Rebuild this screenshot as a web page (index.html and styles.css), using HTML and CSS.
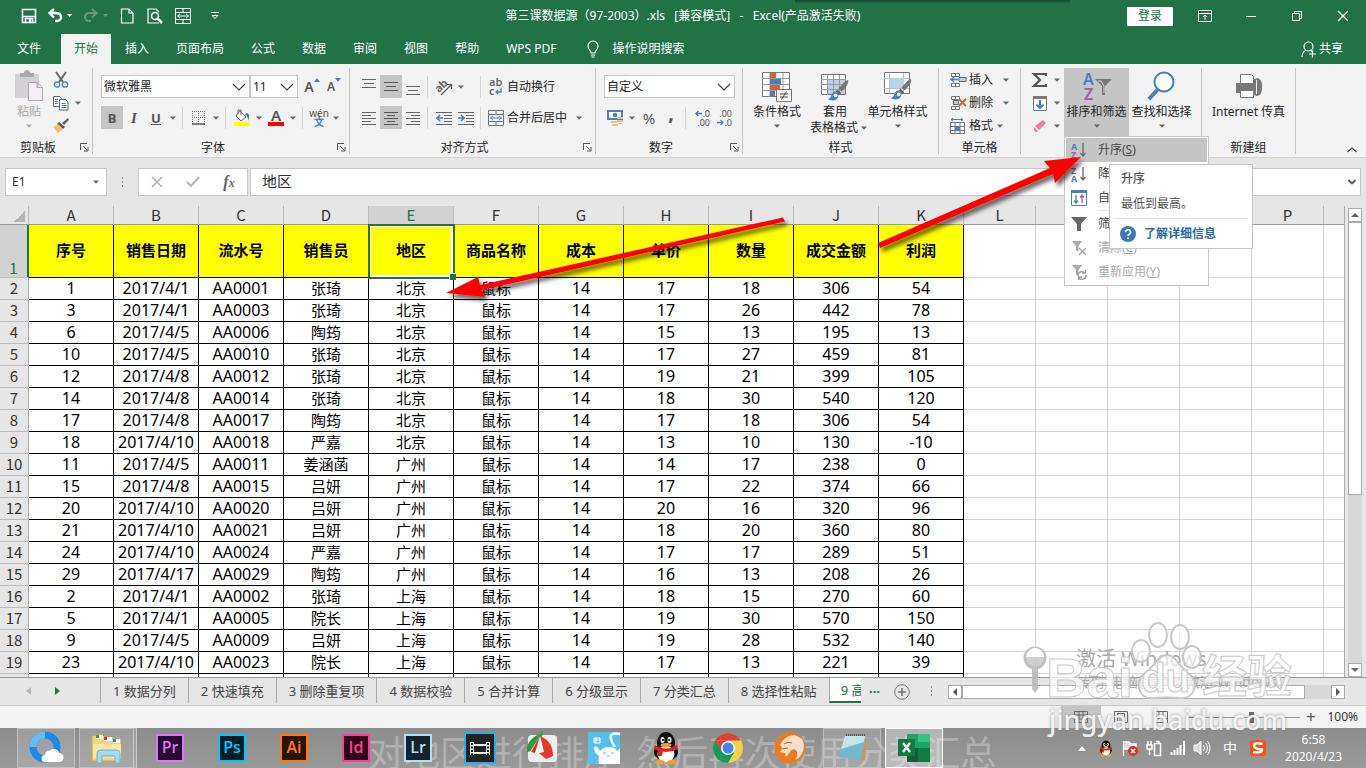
FILE: index.html
```html
<!DOCTYPE html>
<html lang="zh-CN">
<head>
<meta charset="utf-8">
<title>第三课数据源 - Excel</title>
<link rel="stylesheet" href="styles.css">
</head>
<body>
<svg class="defs" width="0" height="0" aria-hidden="true">
  <symbol id="i-arrow" viewBox="0 0 8 8"><path d="M1 2.500h6L4 5.800z" fill="#666"/></symbol>
  <symbol id="i-chev" viewBox="0 0 16 16"><path d="M2 5l6 6 6-6" fill="none" stroke="#444" stroke-width="1.200"/></symbol>
  <symbol id="i-launch" viewBox="0 0 9 9"><path d="M.5 7V.5H7M3 3l4 4M8 4v4H4" fill="none" stroke="#555"/></symbol>
  <symbol id="i-brush" viewBox="0 0 24 24"><path d="M22 1c1 3-2 8-7 12l-3-3c4-5 7-8 10-9z" fill="#777"/><path d="M11 11l4 4-2 2-4-4z" fill="#666"/><path d="M9 13c-5 0-3 6-8 8 6 3 11 1 11-5z" fill="#4a80bd"/><circle cx="9" cy="17" r="2" fill="#fff"/></symbol>
  <symbol id="i-cells" viewBox="0 0 16 16"><path d="M1.500 1.500h8v3h-8zM5.500 1.500v3M1.500 11.500h8v3h-8zM5.500 11.500v3" fill="#fff" stroke="#777"/></symbol>
  <symbol id="i-filter" viewBox="0 0 16 16"><path d="M0 1h16L10 8v7H6V8z"/></symbol>
  <symbol id="i-merge" viewBox="0 0 16 16"><path d="M.5.5h15v15H.5zM.500 4.500h15M.500 11.500h15M8 .5v4M8 11.500v4" class="merge-frame"/><path d="M2.500 8h11M5 5.800L2.700 8 5 10.200M11 5.800L13.300 8 11 10.200" class="merge-arrow"/></symbol>
  <symbol id="i-qq" viewBox="0 0 32 32"><ellipse cx="16" cy="20" rx="12" ry="9" fill="#111"/><ellipse cx="16" cy="11" rx="9" ry="11" fill="#111"/><ellipse cx="16" cy="22" rx="8.500" ry="8" fill="#fff"/><path d="M5 13q11 7 22 0l1 4q-12 6-24 0z" fill="#e71f19"/><path d="M8 17h5l-1 7H8z" fill="#e71f19"/><ellipse cx="12.500" cy="8" rx="2" ry="3" fill="#fff"/><ellipse cx="19.500" cy="8" rx="2" ry="3" fill="#fff"/><circle cx="13" cy="8" r="1"/><circle cx="19" cy="8" r="1"/><ellipse cx="16" cy="13" rx="5.500" ry="2" fill="#f5a31b"/><ellipse cx="10" cy="30" rx="5" ry="2" fill="#f5a31b"/><ellipse cx="22" cy="30" rx="5" ry="2" fill="#f5a31b"/></symbol>
</svg>

<header class="titlebar">
  <div class="quick">
    <button aria-label="保存"><svg width="16" height="16" viewBox="0 0 16 16"><path d="M1.500 1.500h13v13h-13z" fill="none" stroke="#fff" stroke-width="1.600"/><path d="M2 8.500h12M4.500 14v-3.500h7V14" stroke="#fff" stroke-width="1.600" fill="none"/><path d="M8 11h2v3H8z" fill="#fff"/></svg></button>
    <button aria-label="撤消"><svg width="26" height="16" viewBox="0 0 26 16"><path d="M3 5h6c7 0 6 8 1 8H8M7 1L2.500 5 7 9.500" fill="none" stroke="#fff" stroke-width="2.400"/><path d="M20 6h5l-2.500 3z" fill="#fff"/></svg></button>
    <button class="off" aria-label="恢复"><svg width="26" height="16" viewBox="0 0 26 16"><path d="M13 5H7c-7 0-6 8-1 8h2M9 1l4.500 4L9 9.500" fill="none" stroke="#fff" stroke-width="2"/><path d="M20 6h5l-2.500 3z" fill="#fff"/></svg></button>
    <button aria-label="新建"><svg width="14" height="16" viewBox="0 0 14 16"><path d="M1.500 1h7.500l4 4v10H1.500zM9 1v4h4" fill="none" stroke="#fff" stroke-width="1.200"/></svg></button>
    <button aria-label="打印预览"><svg width="16" height="16" viewBox="0 0 16 16"><path d="M12 15H1V1h8l3 3" fill="none" stroke="#fff" stroke-width="1.200"/><circle cx="8" cy="8" r="3.500" fill="none" stroke="#fff" stroke-width="1.600"/><path d="M10 10l5 5" stroke="#fff" stroke-width="2.500"/></svg></button>
    <button aria-label="合并后居中" class="white-icon"><svg width="16" height="16"><use href="#i-merge"/></svg></button>
    <button aria-label="自定义快速访问工具栏"><svg width="10" height="8" viewBox="0 0 10 8"><path d="M1 .5h8M2 3.500l3 3 3-3z" fill="none" stroke="#fff"/></svg></button>
  </div>
  <h1 class="doc-title">第三课数据源（97-2003）.xls&nbsp;&nbsp; [兼容模式]&nbsp;&nbsp; -&nbsp;&nbsp; Excel(产品激活失败)</h1>
  <div class="window-tools">
    <button class="login">登录</button>
    <button aria-label="功能区显示选项"><svg width="14" height="12" viewBox="0 0 14 12"><path d="M.5.500h13v11H.5zM.500 3.500h13M7 10V5M5 7l2-2 2 2" fill="none" stroke="#fff"/></svg></button>
    <button aria-label="最小化"><svg width="10" height="12" viewBox="0 0 10 12"><path d="M0 6.500h10" stroke="#fff"/></svg></button>
    <button aria-label="还原"><svg width="10" height="10" viewBox="0 0 10 10"><path d="M.5 2.500h7v7h-7zM2.500 2V.5h7v7H8" fill="none" stroke="#fff"/></svg></button>
    <button aria-label="关闭"><svg width="10" height="10" viewBox="0 0 10 10"><path d="M0 0l10 10M10 0L0 10" stroke="#fff" stroke-width="1.200"/></svg></button>
  </div>
</header>

<nav class="tabs">
  <button class="file">文件</button><button class="on">开始</button><button>插入</button><button>页面布局</button><button>公式</button><button>数据</button><button>审阅</button><button>视图</button><button>帮助</button><button>WPS PDF</button>
  <button class="tell"><svg width="12" height="17" viewBox="0 0 12 17"><path d="M4 12c0-3-3-3-3-7a5 5 0 0 1 10 0c0 4-3 4-3 7zM4 14h4M4.500 16h3" fill="none" stroke="#fff" stroke-width="1.200"/></svg>操作说明搜索</button>
  <button class="share"><svg width="16" height="17" viewBox="0 0 16 17"><circle cx="7.500" cy="5.500" r="4.500" fill="none" stroke="#fff" stroke-width="1.200"/><path d="M5 9c-3 2-4 4-4 7M9 9l2 1.500M8 13h7M11.500 9.500v7" fill="none" stroke="#fff" stroke-width="1.200"/></svg>共享</button>
</nav>

<section class="ribbon" aria-label="功能区">
  <div class="group g-clip">
    <div class="content row">
      <button class="big paste"><svg width="30" height="32" viewBox="0 0 30 32"><path d="M1 4h24v24H1z" fill="#d5d0d5"/><path d="M6 3h4a3 3 0 0 1 6 0h4v4H6z" fill="#aaa"/><path d="M14.500 12.500h9l5 5v13h-14zM23 12.500v5h5" fill="#f3eff5" stroke="#aaa"/></svg><span>粘贴</span><svg class="dn"><use href="#i-arrow"/></svg></button>
      <div class="stack clip-tools">
        <button class="tool" aria-label="剪切"><svg width="16" height="16" viewBox="0 0 16 16"><path d="M3 0l7 10M13 0L6 10" stroke="#666" stroke-width="2"/><circle cx="4" cy="12.500" r="2.700" fill="none" stroke="#4a80bd" stroke-width="1.300"/><circle cx="12" cy="12.500" r="2.700" fill="none" stroke="#4a80bd" stroke-width="1.300"/></svg></button>
        <div class="row"><button class="tool" aria-label="复制"><svg width="16" height="16" viewBox="0 0 16 16"><path d="M.5 1.500h6l2 2v8h-8z" fill="#fff" stroke="#666"/><path d="M6.500 4.500h6l2.500 2.500v8H6.500z" fill="#fff" stroke="#666"/><path d="M2 4.500h3M2 6.500h3M2 8.500h3M8.500 8.500h4M8.500 10.500h5M8.500 12.500h5" stroke="#4a80bd"/></svg></button><button class="drop" aria-label="复制选项"><svg class="dn"><use href="#i-arrow"/></svg></button></div>
        <button class="tool" aria-label="格式刷"><svg width="16" height="16" viewBox="0 0 16 16"><path d="M15 0l1 2-5 5-2-2z" fill="#666"/><path d="M6 4l6 5-2 2-6-5z" fill="#555"/><path d="M5 6l5 5-5 4-5-6z" fill="#eec07c"/></svg></button>
      </div>
    </div>
    <div class="caption"><span>剪贴板</span><button class="launch" aria-label="剪贴板设置"><svg width="9" height="9"><use href="#i-launch"/></svg></button></div>
  </div>

  <div class="group g-font">
    <div class="content lines">
      <div class="row">
        <label class="combo font-name"><select aria-label="字体"><option>微软雅黑</option></select><svg width="16" height="16"><use href="#i-chev"/></svg></label>
        <label class="combo font-size"><select aria-label="字号"><option>11</option></select><svg width="16" height="16"><use href="#i-chev"/></svg></label>
        <button class="tool grow" aria-label="增大字号">A<svg width="6" height="4" viewBox="0 0 6 4"><path d="M0 4l3-4 3 4z" fill="#4a80bd"/></svg></button>
        <button class="tool shrink" aria-label="减小字号">A<svg width="6" height="4" viewBox="0 0 6 4"><path d="M0 0h6L3 4z" fill="#4a80bd"/></svg></button>
      </div>
      <div class="row">
        <button class="tool sel letter"><b>B</b></button><button class="tool letter serif"><i>I</i></button><button class="tool letter"><u>U</u></button><button class="drop" aria-label="下划线选项"><svg class="dn"><use href="#i-arrow"/></svg></button><i class="sep"></i>
        <button class="tool" aria-label="边框"><svg width="14" height="14" viewBox="0 0 14 14"><path d="M.5 0v13M6.500 0v13M12.500 0v13M0 .5h13M0 6.500h13" stroke="#777" stroke-dasharray="1 1"/><path d="M0 13h13" stroke="#555" stroke-width="1.500"/></svg></button><button class="drop" aria-label="边框选项"><svg class="dn"><use href="#i-arrow"/></svg></button><i class="sep"></i>
        <button class="tool" aria-label="填充颜色"><svg width="16" height="17" viewBox="0 0 16 17"><path d="M6 2l6 6-5 4-5-5zM4 5V1h3v5" fill="#fff" stroke="#666"/><path d="M12 4c4 0 4 4 2 8 0-4-1-5-3-6z" fill="#4a80bd"/><path d="M0 13h16v4H0z" fill="#ff0"/></svg></button><button class="drop" aria-label="填充选项"><svg class="dn"><use href="#i-arrow"/></svg></button>
        <button class="tool font-color" aria-label="字体颜色">A</button><button class="drop" aria-label="颜色选项"><svg class="dn"><use href="#i-arrow"/></svg></button><i class="sep"></i>
        <button class="tool pinyin"><span>wén</span><span class="blue">文</span></button><button class="drop" aria-label="拼音选项"><svg class="dn"><use href="#i-arrow"/></svg></button>
      </div>
    </div>
    <div class="caption"><span>字体</span><button class="launch" aria-label="字体设置"><svg width="9" height="9"><use href="#i-launch"/></svg></button></div>
  </div>

  <div class="group g-align">
    <div class="content lines">
      <div class="row">
        <button class="tool" aria-label="顶端对齐"><svg width="14" height="16" viewBox="0 0 14 16"><path d="M0 .5h14M2 4.500h10M0 8.500h14" stroke="#666"/></svg></button><button class="tool sel" aria-label="垂直居中"><svg width="14" height="16" viewBox="0 0 14 16"><path d="M0 3.500h14M2 7.500h10M0 11.500h14" stroke="#555"/></svg></button><button class="tool" aria-label="底端对齐"><svg width="14" height="16" viewBox="0 0 14 16"><path d="M0 7.500h14M2 11.500h10M0 15.500h14" stroke="#666"/></svg></button><i class="sep"></i>
        <button class="tool" aria-label="方向"><svg width="18" height="18" viewBox="0 0 18 18"><text x="0" y="12" transform="rotate(-45 6 9)" font-size="11" font-weight="bold" fill="#666">ab</text><path d="M6 17L16 7M12 6.500h4.500V11" fill="none" stroke="#555" stroke-width="1.200"/></svg></button><button class="drop after-orient" aria-label="方向选项"><svg class="dn"><use href="#i-arrow"/></svg></button><i class="sep"></i>
        <button class="labeled"><svg width="16" height="18" viewBox="0 0 16 18"><text x="1" y="8" font-size="11" font-weight="600" fill="#666">ab</text><text x="1" y="17" font-size="11" font-weight="600" fill="#666">c</text><path d="M13 10v4H8M10 12l-2 2 2 2" fill="none" stroke="#4a80bd" stroke-width="1.300"/></svg>自动换行</button>
      </div>
      <div class="row">
        <button class="tool" aria-label="左对齐"><svg width="14" height="14" viewBox="0 0 14 14"><path d="M0 1.500h14M0 4.500h9M0 7.500h14M0 10.500h9M0 13.500h14" stroke="#666"/></svg></button><button class="tool sel" aria-label="居中"><svg width="14" height="14" viewBox="0 0 14 14"><path d="M0 1.500h14M3 4.500h8M0 7.500h14M3 10.500h8M0 13.500h14" stroke="#555"/></svg></button><button class="tool" aria-label="右对齐"><svg width="14" height="14" viewBox="0 0 14 14"><path d="M0 1.500h14M5 4.500h9M0 7.500h14M5 10.500h9M0 13.500h14" stroke="#666"/></svg></button><i class="sep"></i>
        <button class="tool" aria-label="减少缩进"><svg width="16" height="14" viewBox="0 0 16 14"><path d="M0 1.500h16M8 4.500h8M8 7.500h8M8 10.500h8M0 13.500h16" stroke="#666"/><path d="M7 7H1M4 4L1 7l3 3" fill="none" stroke="#4a80bd" stroke-width="1.700"/></svg></button><button class="tool" aria-label="增加缩进"><svg width="16" height="14" viewBox="0 0 16 14"><path d="M0 1.500h16M8 4.500h8M8 7.500h8M8 10.500h8M0 13.500h16" stroke="#666"/><path d="M0 7h6M3 4l3 3-3 3" fill="none" stroke="#4a80bd" stroke-width="1.700"/></svg></button><i class="sep"></i>
        <button class="labeled"><svg width="16" height="16"><use href="#i-merge"/></svg>合并后居中</button><button class="drop push" aria-label="合并选项"><svg class="dn"><use href="#i-arrow"/></svg></button>
      </div>
    </div>
    <div class="caption"><span>对齐方式</span><button class="launch" aria-label="对齐设置"><svg width="9" height="9"><use href="#i-launch"/></svg></button></div>
  </div>

  <div class="group g-num">
    <div class="content lines">
      <div class="row"><label class="combo num-format"><select aria-label="数字格式"><option>自定义</option></select><svg width="16" height="16"><use href="#i-chev"/></svg></label></div>
      <div class="row">
        <button class="tool" aria-label="会计数字格式"><svg width="17" height="16" viewBox="0 0 17 16"><path d="M1 1h14v8H1z" fill="#fff" stroke="#4a80bd" stroke-width="2"/><circle cx="8" cy="5" r="2.300" fill="#4a80bd"/><path d="M10 7h6v2h-6zM10 10h6v2h-6zM4 11h6v2H4zM5 14h6v2H5zM11 13h5v1h-5z" fill="#eec07c"/></svg></button><button class="drop" aria-label="会计选项"><svg class="dn"><use href="#i-arrow"/></svg></button>
        <button class="tool percent">%</button><button class="tool comma">,</button><i class="sep"></i>
        <button class="tool dec" aria-label="增加小数位数"><span><svg width="7" height="7" viewBox="0 0 7 7"><path d="M7 3.500H1M3.500 1L1 3.500 3.500 6" fill="none" stroke="#4a80bd" stroke-width="1.400"/></svg>.0</span><span>.00</span></button><button class="tool dec" aria-label="减少小数位数"><span>.00</span><span><svg width="7" height="7" viewBox="0 0 7 7"><path d="M0 3.500h6M3.500 1L6 3.500 3.500 6" fill="none" stroke="#4a80bd" stroke-width="1.400"/></svg>.0</span></button>
      </div>
    </div>
    <div class="caption"><span>数字</span><button class="launch" aria-label="数字设置"><svg width="9" height="9"><use href="#i-launch"/></svg></button></div>
  </div>

  <div class="group g-style">
    <div class="content row">
      <button class="big"><svg width="32" height="32" viewBox="0 0 32 32"><path d="M1.500 2.500h27v24h-27z" fill="#fff" stroke="#777"/><path d="M1 8.500h27M1 14.500h27M1 20.500h27M9 3v24M22 3v24" stroke="#999"/><path d="M9 3h6v5H9zM9 15h10v5H9z" fill="#d9603b"/><path d="M9 9h11v5H9zM9 21h5v5H9z" fill="#4a80bd"/><path d="M15.500 19.500h15v12h-15z" fill="#fff" stroke="#777"/><path d="M19 24h8M19 27h8M25.500 21.500l-5 8" stroke="#444"/></svg><span>条件格式</span><svg class="dn"><use href="#i-arrow"/></svg></button>
      <button class="big"><svg width="32" height="32" viewBox="0 0 32 32"><path d="M2.500 4.500h24v20h-24z" fill="#fff" stroke="#777"/><path d="M8 9h18v15H8z" fill="#bdd0e9"/><path d="M2 9.500h25M2 14.500h25M2 19.500h25M8.500 5v20M14.500 5v20M20.500 5v20" stroke="#999"/><use href="#i-brush" x="8" y="9" width="23" height="23"/></svg><span>套用</span><span class="two">表格格式<svg class="dn"><use href="#i-arrow"/></svg></span></button>
      <button class="big cell-style"><svg width="32" height="32" viewBox="0 0 32 32"><path d="M2.500 2.500h25v21h-25z" fill="#fff" stroke="#777"/><path d="M2 8.500h25M2 18.500h25M7.500 3v20M21.500 3v20" stroke="#bbb"/><path d="M8 8h14v10H8z" fill="#bdd0e9"/><use href="#i-brush" x="8" y="8" width="23" height="23"/></svg><span>单元格样式</span><svg class="dn"><use href="#i-arrow"/></svg></button>
    </div>
    <div class="caption"><span>样式</span></div>
  </div>

  <div class="group g-cells">
    <div class="content stack">
      <button class="labeled"><svg width="16" height="16" viewBox="0 0 16 16"><use href="#i-cells"/><path d="M9 5.500h7v4H9z" fill="#bdd0e9" stroke="#666"/><path d="M8 7.500H1M4 5L1 7.500 4 10" fill="none" stroke="#4a80bd" stroke-width="1.500"/></svg>插入<svg class="dn far"><use href="#i-arrow"/></svg></button>
      <button class="labeled"><svg width="16" height="16" viewBox="0 0 16 16"><use href="#i-cells"/><path d="M3.500 5.500h5v4h-5z" fill="#bdd0e9" stroke="#666"/><path d="M9 4l7 7M16 4l-7 7" stroke="#d9603b" stroke-width="1.800"/></svg>删除<svg class="dn far"><use href="#i-arrow"/></svg></button>
      <button class="labeled"><svg width="16" height="16" viewBox="0 0 16 16"><path d="M1 1.500h12M3 0L1 1.500 3 3M11 0l2 1.500L11 3" fill="none" stroke="#4a80bd"/><path d="M.5 4.500h14v11H.5zM.5 8.500h14M.5 12.500h14M5 4.500v11M10 4.500v11" fill="#fff" stroke="#777"/><path d="M5 8h5v4H5z" fill="#4a80bd"/></svg>格式<svg class="dn"><use href="#i-arrow"/></svg></button>
    </div>
    <div class="caption"><span>单元格</span></div>
  </div>

  <div class="group g-edit">
    <div class="content row">
      <div class="stack edit-tools">
        <div class="row"><button class="tool" aria-label="自动求和"><svg width="16" height="16" viewBox="0 0 16 16"><path d="M14 4V2H2l6 6-6 6h12v-2" fill="none" stroke="#555" stroke-width="2.200"/></svg></button><button class="drop" aria-label="求和选项"><svg class="dn"><use href="#i-arrow"/></svg></button></div>
        <div class="row"><button class="tool" aria-label="填充"><svg width="14" height="16" viewBox="0 0 14 16"><path d="M.5 1.500h13v14H.5z" fill="#fff" stroke="#777"/><path d="M0 1h14v3H0z" fill="#777"/><path d="M7 5v8M3.500 9.500L7 13l3.500-3.500" fill="none" stroke="#4a80bd" stroke-width="2"/></svg></button><button class="drop" aria-label="填充选项"><svg class="dn"><use href="#i-arrow"/></svg></button></div>
        <div class="row"><button class="tool" aria-label="清除"><svg width="14" height="14" viewBox="0 0 14 14"><path d="M10 1l3 3-7 7-4-4z" fill="#e8829a"/><path d="M1 8l4 4-1 1H2l-1-2z" fill="#e8829a"/></svg></button><button class="drop" aria-label="清除选项"><svg class="dn"><use href="#i-arrow"/></svg></button></div>
      </div>
      <div class="anchor">
        <button class="big sel" aria-expanded="true"><svg width="32" height="32" viewBox="0 0 32 32"><text x="2" y="15" font-size="16" font-weight="600" fill="#4a80bd">A</text><text x="3" y="30" font-size="16" font-weight="600" fill="#9b59b6">Z</text><path d="M14 9h17l-7 7v9h-3v-9z" fill="#777"/><path d="M17 11h3l3 5v7" fill="none" stroke="#ddd"/></svg><span>排序和筛选</span><svg class="dn"><use href="#i-arrow"/></svg></button>
        <div class="menu" role="menu">
          <button class="hot" role="menuitem"><svg width="16" height="16" viewBox="0 0 16 16"><text x="0" y="8" font-size="9" font-weight="bold" fill="#4a80bd">A</text><text x="0" y="16" font-size="9" font-weight="bold" fill="#9b59b6">Z</text><path d="M12 1v13M9.500 11l2.500 3 2.500-3" fill="none" stroke="#666" stroke-width="1.300"/></svg>升序(<u>S</u>)</button>
          <button role="menuitem"><svg width="16" height="16" viewBox="0 0 16 16"><text x="0" y="8" font-size="9" font-weight="bold" fill="#9b59b6">Z</text><text x="0" y="16" font-size="9" font-weight="bold" fill="#4a80bd">A</text><path d="M12 1v13M9.500 11l2.500 3 2.500-3" fill="none" stroke="#666" stroke-width="1.300"/></svg>降序(<u>O</u>)</button>
          <button role="menuitem"><svg width="16" height="16" viewBox="0 0 16 16"><path d="M.5.500h15v15H.5z" fill="#fff" stroke="#4a80bd"/><path d="M0 0h16v3H0z" fill="#4a80bd"/><path d="M5 5v8M3 10.500L5 13l2-2.500" fill="none" stroke="#4a80bd" stroke-width="1.300"/><path d="M11 13V5M9 7.500L11 5l2 2.500" fill="none" stroke="#9b59b6" stroke-width="1.300"/></svg>自定义排序(<u>U</u>)...</button>
          <hr>
          <button role="menuitem"><svg width="16" height="16" fill="#666"><use href="#i-filter"/></svg>筛选(<u>F</u>)</button>
          <button role="menuitem" disabled><svg width="16" height="16" viewBox="0 0 16 16"><path d="M1 1h10L7.500 6v5H5V6z" fill="#aaa"/><path d="M8 8l7 7M15 8l-7 7" stroke="#aaa" stroke-width="1.500"/></svg>清除(<u>C</u>)</button>
          <button role="menuitem" disabled><svg width="16" height="16" viewBox="0 0 16 16"><path d="M1 1h10L7.500 6v5H5V6z" fill="#aaa"/><path d="M7 12a4 4 0 0 1 7-3M15 11a4 4 0 0 1-7 3M14.500 6v3H11M7.500 16v-3H11" fill="none" stroke="#999" stroke-width="1.300"/></svg>重新应用(<u>Y</u>)</button>
          <div class="tip" role="tooltip">
            <strong>升序</strong><p>最低到最高。</p>
            <a href="#help"><svg width="16" height="16" viewBox="0 0 16 16"><circle cx="8" cy="8" r="8" fill="#3a77b5"/><path d="M5.500 6.200a2.500 2.500 0 1 1 3.600 2.200Q8 9 8 10" fill="none" stroke="#fff" stroke-width="1.600"/><circle cx="8" cy="12.300" r="1" fill="#fff"/></svg>了解详细信息</a>
          </div>
        </div>
      </div>
      <button class="big find"><svg width="32" height="32" viewBox="0 0 32 32"><path d="M3 29l10-11" stroke="#4a80bd" stroke-width="4"/><circle cx="18" cy="12" r="9.500" fill="#fff" stroke="#4a80bd" stroke-width="2"/></svg><span>查找和选择</span><svg class="dn"><use href="#i-arrow"/></svg></button>
    </div>
    <div class="caption"></div>
  </div>

  <div class="group g-fax">
    <div class="content row">
      <button class="big"><svg width="32" height="32" viewBox="0 0 32 32"><path d="M3 13h18V9l4-1q5 3 4 10 0 7-5 8l-3-1v-2H3z" fill="#777"/><path d="M7.500 4.500h11l2 2v7h-13zM7.500 20.500h13v7h-13z" fill="#fff" stroke="#777"/><path d="M23.500 10v14" stroke="#eee"/></svg><span>Internet 传真</span></button>
    </div>
    <div class="caption"><span>新建组</span></div>
  </div>
  <button class="collapse" aria-label="折叠功能区"><svg width="12" height="8" viewBox="0 0 12 8"><path d="M1.500 6L6 2l4.500 4" fill="none" stroke="#444" stroke-width="1.200"/></svg></button>
</section>

<section class="formula">
  <label class="combo name-box"><select aria-label="名称框"><option>E1</option></select><svg class="dn"><use href="#i-arrow"/></svg></label>
  <span class="grip"></span>
  <div class="fx-tools">
    <button aria-label="取消"><svg width="12" height="12" viewBox="0 0 12 12"><path d="M1 1l10 10M11 1L1 11" stroke="#b5b5b5" stroke-width="1.700"/></svg></button>
    <button aria-label="输入"><svg width="14" height="12" viewBox="0 0 14 12"><path d="M1 6l4 4 8-9" fill="none" stroke="#b5b5b5" stroke-width="2.200"/></svg></button>
    <button class="fx">f<small>x</small></button>
  </div>
  <div class="fx-input"><input aria-label="编辑栏" value="地区"><svg width="10" height="10" viewBox="0 0 10 10"><path d="M1.500 3L5 6.500 8.500 3" fill="none" stroke="#555" stroke-width="1.800"/></svg></div>
</section>

<main class="sheet">
  <div class="viewport"><table class="grid"><colgroup id="cols"></colgroup><thead id="head"></thead><tbody id="body"></tbody></table></div>
  <div class="vscroll"><button aria-label="向上滚动"><svg width="8" height="8" viewBox="0 0 8 8"><path d="M0 6l4-4 4 4z" fill="#666"/></svg></button><div class="track"><div class="thumb"></div></div><button aria-label="向下滚动"><svg width="8" height="8" viewBox="0 0 8 8"><path d="M0 2l4 4 4-4z" fill="#666"/></svg></button></div>
</main>

<nav class="sheet-tabs">
  <div class="nav-arrows"><button aria-label="上一个"><svg width="6" height="8" viewBox="0 0 6 8"><path d="M5 0v8L0 4z" fill="#b5b5b5"/></svg></button><button aria-label="下一个"><svg width="6" height="8" viewBox="0 0 6 8"><path d="M1 0v8l5-4z" fill="#217346"/></svg></button></div>
  <div class="sheets"><button>1 数据分列</button><button>2 快速填充</button><button>3 删除重复项</button><button>4 数据校验</button><button>5 合并计算</button><button>6 分级显示</button><button>7 分类汇总</button><button>8 选择性粘贴</button><button class="current">9 高级筛选</button></div>
  <button class="more" aria-label="更多工作表">...</button>
  <button class="add" aria-label="新工作表"><svg width="16" height="16" viewBox="0 0 16 16"><circle cx="8" cy="8" r="7.300" fill="none" stroke="#777"/><path d="M8 4v8M4 8h8" stroke="#777" stroke-width="1.700"/></svg></button>
  <span class="grip"></span>
  <div class="hscroll"><button aria-label="向左滚动"><svg width="8" height="8" viewBox="0 0 8 8"><path d="M6 0v8L2 4z" fill="#555"/></svg></button><div class="track"><div class="thumb"></div></div><button aria-label="向右滚动"><svg width="8" height="8" viewBox="0 0 8 8"><path d="M2 0v8l4-4z" fill="#555"/></svg></button></div>
</nav>

<footer class="status">
  <button class="sel" aria-label="普通"><svg width="14" height="12" viewBox="0 0 14 12"><path d="M.5.500h13v11H.5zM.5 4h13M.5 8h13M5 .5v11M9 .5v11" fill="none" stroke="#666"/></svg></button>
  <button aria-label="页面布局"><svg width="14" height="12" viewBox="0 0 14 12"><path d="M.5.500h13v11H.5zM3.500 2.500h7v9h-7zM5 5h4M5 7h4M5 9h4" fill="none" stroke="#666"/></svg></button>
  <button aria-label="分页预览"><svg width="14" height="12" viewBox="0 0 14 12"><path d="M.5.500h13v11H.5zM5 .5v6.500M9 .5v6.500M.5 7.500h5M9 7.500h5" fill="none" stroke="#666"/></svg></button>
  <button class="zoom-btn">−</button><input class="zoom" type="range" min="0" max="100" value="50" aria-label="显示比例"><button class="zoom-btn">+</button><span class="zoom-value">100%</span>
</footer>

<footer class="taskbar">
  <p class="subtitle">对地区进行排序&nbsp; 然后再次使用分类汇总</p>
  <div class="apps">
    <button class="open" aria-label="浏览器"><svg width="34" height="34" viewBox="0 0 34 34"><circle cx="16" cy="16" r="12" fill="none" stroke="#1e88e5" stroke-width="7"/><path d="M4 16A12 12 0 0 1 16 4" fill="none" stroke="#63bdf5" stroke-width="7"/><path d="M16 31h14a4.500 4.500 0 0 0 0-9 5 5 0 0 0-9-2 4 4 0 0 0-5 4 3.500 3.500 0 0 0 0 7z" fill="#fff"/></svg></button>
    <button class="open multi" aria-label="文件资源管理器"><svg width="34" height="32" viewBox="0 0 34 32"><path d="M2 4l10-2 3 3 16 2v22H2z" fill="#f1d681" stroke="#c9a94d"/><path d="M6 3h7v4H6zM14 5h8v4h-8zM23 7h7v4h-7z" fill="#fff"/><path d="M6 3h3v3H6z" fill="#2e9e3e"/><path d="M14 5h3v3h-3z" fill="#c33"/><path d="M23 7h3v3h-3z" fill="#28c"/><path d="M3 12h28v14H3z" fill="#f8e7a7"/><path d="M7 31V21q0-3 4-3h15q4 0 4 3v10h-5v-7H12v7z" fill="#a6d8ee" stroke="#6fb1cf"/></svg></button>
    <button><span class="adobe pr">Pr</span></button><button><span class="adobe ps">Ps</span></button><button><span class="adobe ai">Ai</span></button><button><span class="adobe id">Id</span></button><button><span class="adobe lr">Lr</span></button>
    <button aria-label="视频编辑"><svg width="32" height="32" viewBox="0 0 32 32"><path d="M1 1h30v30H1z" fill="#222" stroke="#1db4ea" stroke-width="2"/><path d="M6 10h4v13H6zM22 10h4v13h-4zM10 12h12v2H10zM10 20h12v2H10z" fill="#eee"/><path d="M8 11v12M24 11v12" stroke="#222" stroke-width="2" stroke-dasharray="2 1.500"/></svg></button>
    <button aria-label="播放器"><svg width="34" height="34" viewBox="0 0 34 34"><rect x="3" y="4" width="29" height="27" rx="4" fill="#eee"/><path d="M15 3C6 6 1 13 2 21l6-1 9-15z" fill="#2d9b3c"/><path d="M15 5L5 21l10 1z" fill="#fff"/><path d="M15 5L6 21l4 1z" fill="#d72e28"/><path d="M15 5l-1 17 7 6 7-3Q28 10 15 5z" fill="#e33a2c"/><path d="M15 5l-1 17 5-1z" fill="#fff"/><path d="M12 6l5-6 1 1-1 5z" fill="#31a245"/></svg></button>
    <button aria-label="字幕工具"><svg width="32" height="32" viewBox="0 0 32 32"><path d="M0 0h32v32H0z" fill="#56c0e8"/><path d="M11 32q-1-5 0-8-6-4-5-9 3-2 6 4 3-4 9-4 6 0 8 4l3-3v16z" fill="#fff"/><path d="M32 2q-11-2-9 5 1 4 4 8" fill="none" stroke="#fff" stroke-width="2.500"/><path d="M15 21h3M23 21h3M19 24h3" stroke="#56c0e8"/><path d="M6 6h6v5H6zM8 6v5M6 8h6" fill="none" stroke="#fff"/></svg></button>
    <button aria-label="QQ"><svg width="32" height="32"><use href="#i-qq"/></svg></button>
    <button aria-label="Chrome"><svg width="30" height="30" viewBox="0 0 30 30"><circle cx="15" cy="15" r="15" fill="#f9cf45"/><path d="M2 7.500A15 15 0 0 1 28 7.500H15z" fill="#db4437"/><path d="M2 7.500A15 15 0 0 0 15 30l6.500-11.300L15 15z" fill="#0f9d58"/><path d="M2 7.500L8.500 19 15 7.500z" fill="#db4437"/><circle cx="15" cy="15" r="7" fill="#fff"/><circle cx="15" cy="15" r="5.500" fill="#4285f4"/></svg></button>
    <button aria-label="浏览器"><svg width="32" height="32" viewBox="0 0 32 32"><circle cx="16" cy="16" r="15.500" fill="#ee7a1f"/><path d="M6 13Q10 4 20 3q9 2 10 10 0 11-9 15 4-6 1-10-4-2-6 2l-4 5-1-4-5-1q4-4 0-7z" fill="#f9dfc9"/><path d="M10 12q4-3 8-1M8 17l6-1" stroke="#c55a12" fill="none"/></svg></button>
    <button class="open" aria-label="记事本"><svg width="34" height="32" viewBox="0 0 34 32"><path d="M28 4l4 3-2 21-4 1z" fill="#b99c69"/><path d="M10 4h20l-4 24-23-3z" fill="#72b9cc"/><path d="M10 4h20l-1 6L6 17z" fill="#c3e6ec"/><path d="M11 3h19" stroke="#555" stroke-width="2" stroke-dasharray="1 1"/></svg></button>
    <button class="open front" aria-label="Excel"><svg width="32" height="30" viewBox="0 0 32 30"><path d="M9 1h23v28H9z" fill="#21a366"/><path d="M20 1h12v8H20z" fill="#33c481"/><path d="M9 15h12v14H9z" fill="#185c37"/><path d="M20 15h12v14H20z" fill="#107c41"/><path d="M0 6h17v17H0z" fill="#107c41"/><path d="M5 10l7 9M12 10l-7 9" stroke="#fff" stroke-width="2.300"/></svg></button>
  </div>
  <div class="tray">
    <button aria-label="显示隐藏的图标"><svg width="8" height="5" viewBox="0 0 8 5"><path d="M4 0l4 5H0z" fill="#fff"/></svg></button>
    <button aria-label="QQ"><svg width="16" height="17"><use href="#i-qq"/></svg></button>
    <button aria-label="操作中心"><svg width="17" height="16" viewBox="0 0 17 16"><path d="M1.500 1v15M2 2h5l2 2h5v7H9L7 9H2" fill="#ddd" stroke="#fff" stroke-width="1.300"/><circle cx="11" cy="11" r="5" fill="#d8302a"/><path d="M9 9l4 4M13 9l-4 4" stroke="#fff" stroke-width="1.500"/></svg></button>
    <button aria-label="电源"><svg width="16" height="16" viewBox="0 0 16 16"><path d="M8.500 3.500h6v12h-6zM10 1.500h3v2M2 1v4M5 1v4M1 5h5v4H1zM3.500 9v6" fill="none" stroke="#fff" stroke-width="1.500"/></svg></button>
    <button aria-label="网络"><svg width="16" height="14" viewBox="0 0 16 14"><path d="M1.500 14v-3M4.500 14v-5M7.500 14V7M10.500 14V4M14 14V0" stroke="#fff" stroke-width="2"/></svg></button>
    <button aria-label="音量"><svg width="16" height="16" viewBox="0 0 16 16"><path d="M0 5h3l4-4v14l-4-4H0z" fill="#ddd" stroke="#fff"/><path d="M9.500 5q2 3 0 6M11.500 3q4 5 0 10M13.500 1q5 7 0 14" fill="none" stroke="#fff"/></svg></button>
    <button class="ime">中</button>
    <button aria-label="输入法"><svg width="16" height="16" viewBox="0 0 16 16"><rect width="16" height="16" rx="3" fill="#f4511e"/><path d="M12.500 4Q4 2 4 5.500T12 9.500Q12 13.500 3 12" fill="none" stroke="#fff" stroke-width="2.400"/></svg></button>
    <div class="clock"><time>6:58</time><time>2020/4/23</time></div>
  </div>
</footer>

<svg class="annot" width="1366" height="768" viewBox="0 0 1366 768" aria-hidden="true">
  <defs><filter id="soft" x="-20%" y="-20%" width="140%" height="150%"><feDropShadow dx="3" dy="4" stdDeviation="2" flood-opacity=".6"/></filter></defs>
  <g fill="#f00" filter="url(#soft)">
    <path d="M446 293l32-16 2 8L783 217.500l2 4L482 290l3 7z"/>
    <path d="M1081 157l-37 4 6 7L878 243l2 5 173-74 2 9z"/>
  </g>
</svg>

<div class="watermark" aria-hidden="true">
  <svg class="key" width="26" height="48" viewBox="0 0 26 48"><circle cx="13" cy="13" r="10" fill="#ccc" stroke="#bbb" stroke-width="3"/><path d="M4 12a9 9 0 0 1 18 0z" fill="#fff"/><path d="M10 24h6v20l-3 4-3-4z" fill="#bbb"/></svg>
  <div class="activate"><p class="a1">激活 Windows</p><p class="a2">转到"电脑设置"以激活 Windows。</p></div>
  <svg class="paw" width="72" height="80" viewBox="0 0 72 80"><g fill="#fff" fill-opacity=".65" stroke="#c8c8c8" stroke-width="2"><ellipse cx="28" cy="15" rx="9" ry="12"/><ellipse cx="50" cy="17" rx="9" ry="12"/><ellipse cx="11" cy="31" rx="9" ry="11"/><ellipse cx="62" cy="37" rx="9" ry="11"/><path d="M37 35c9 0 12 12 22 19 11 9 5 25-8 24q-14-1-29 0c-13 1-18-15-8-24 10-7 14-19 23-19z"/></g></svg>
  <p class="brand"><span class="bai">Bai</span><span class="du">du</span><span class="jy">经验</span></p>
  <p class="url">jingyan.baidu.com</p>
</div>
<script src="grid.js"></script>
</body>
</html>
```

FILE: styles.css
```css
* { box-sizing: border-box; }
body { margin: 0; height: 100vh; display: flex; flex-direction: column; position: relative; overflow: hidden; background: #e6e6e6; color: #333; font: 12px/16px "Noto Sans", "Noto Sans CJK SC", sans-serif; }
button, input, select { font: inherit; color: inherit; }
button { border: 0; padding: 0; background: none; display: flex; align-items: center; justify-content: center; white-space: nowrap; }
p, h1 { margin: 0; font-weight: normal; }
svg { flex: none; display: block; overflow: visible; }
.defs { position: absolute; }
.row { display: flex; align-items: center; }
.stack { display: flex; flex-direction: column; }
.dn { width: 8px; height: 8px; }
.merge-frame { fill: none; stroke: var(--frame, #777); }
.merge-arrow { fill: none; stroke: var(--arrow, #4a80bd); }

.titlebar { display: grid; grid-template-columns: 1fr auto 1fr; align-items: center; min-height: 32px; background: linear-gradient(#17452d, #217346) 795px 0 / 275px 4px no-repeat #217346; color: #fff; }
.quick { display: flex; align-items: center; gap: 10px; padding-left: 21px; }
.quick button:nth-child(4) { margin: 0 3px 0 1px; }
.quick button:nth-child(6) { margin: 0 9px 0 2px; }
.quick .off { opacity: .3; }
.white-icon { --frame: #fff; --arrow: #fff; }
.doc-title { font-size: 12px; line-height: 16px; }
.window-tools { display: flex; justify-content: flex-end; align-items: center; }
.window-tools button { width: 46px; height: 30px; }
.window-tools .login { height: 19px; background: #fff; color: #217346; border-radius: 1px; margin-right: 9px; }
.tabs { display: flex; align-items: stretch; gap: 1px; min-height: 32px; padding-top: 2px; background: #217346; color: #fff; }
.tabs button { padding: 0 13px; color: #fff; }
.tabs .file { padding: 0 19px 0 17px; }
.tabs .on { background: #f3f3f3; color: #217346; }
.tabs .tell { gap: 14px; padding-left: 16px; }
.tabs .share { margin-left: auto; gap: 2px; padding-right: 23px; }

.ribbon { display: flex; align-items: stretch; background: #f3f3f3; border-bottom: 1px solid #d2d2d2; padding: 4px 0 3px; position: relative; z-index: 3; }
.group { display: flex; flex-direction: column; border-right: 1px solid #c6c6c6; min-height: 86px; flex: none; color: #262626; }
.content { height: 73px; flex: none; }
.content.row { align-items: flex-start; }
.caption { display: flex; height: 13px; align-items: center; }
.caption span { flex: 1; text-align: center; }
.launch { width: 16px; height: 16px; }
.g-clip { width: 93px; }
.g-font { width: 257px; }
.g-align { width: 246px; }
.g-num { width: 147px; }
.g-style { width: 196px; }
.g-cells { width: 82px; }
.g-edit { width: 181px; }
.g-fax { width: 94px; }
.lines { padding: 7px 8px 0; display: flex; flex-direction: column; gap: 8px; }
.tool { width: 22px; height: 23px; color: #555; flex: none; }
.drop { width: 12px; height: 23px; flex: none; }
.sel { background: #c5c5c5; }
.sep { width: 1px; height: 22px; margin: 0 5px 0 3px; background: #d5d5d5; flex: none; }
.big { flex-direction: column; justify-content: flex-start; padding-top: 2px; width: 58px; height: 68px; line-height: 16px; flex: none; }
.big > svg:first-child { margin-bottom: 2px; }
.big .dn { margin-top: 2px; }
.paste { margin-left: 4px; width: 50px; color: #aaa; }
.paste .dn { opacity: .5; }
.clip-tools { margin-left: -4px; }
.combo { display: grid; align-items: center; background: #fff; border: 1px solid #c6c6c6; height: 23px; flex: none; }
.combo > * { grid-area: 1 / 1; }
.combo > svg { justify-self: end; margin-right: 2px; pointer-events: none; }
.combo select { appearance: none; border: 0; background: none; width: 100%; padding: 0 2px; outline: 0; }
.font-name { width: 149px; }
.font-size { width: 48px; }
.num-format { width: 131px; }
.grow, .shrink { align-items: center; font-weight: 600; font-size: 14px; }
.grow { margin-left: 3px; }
.shrink { font-size: 12px; }
.grow svg, .shrink svg { align-self: flex-start; margin-top: 3px; }
.letter { font-size: 13px; }
.serif { font-family: "Liberation Serif", serif; font-size: 15px; font-weight: bold; }
.letter u { font-weight: bold; }
.font-color { font-weight: 600; font-size: 15px; line-height: 13px; height: 17px; width: 16px; margin: 0 3px; border-bottom: 4px solid red; }
.pinyin { flex-direction: column; font-size: 10px; line-height: 9px; }
.blue { color: #4a80bd; font-weight: bold; }
.after-orient { margin-right: 10px; }
.labeled { gap: 3px; padding-left: 2px; height: 23px; justify-content: flex-start; }
.push { margin-left: 6px; }
.percent { font-size: 15px; }
.comma { font-weight: bold; font-size: 20px; line-height: 10px; padding-bottom: 10px; }
.dec { flex-direction: column; align-items: flex-end; padding-right: 3px; font-size: 9px; line-height: 9px; }
.dec span { display: flex; align-items: center; }
.g-style .content { padding-left: 5px; }
.two { display: flex; align-items: center; gap: 2px; padding-left: 8px; }
.two .dn { margin-top: 0; }
.cell-style { width: 67px; }
.g-cells .content { padding: 0 0 0 9px; }
.g-cells .far { margin-left: 6px; }
.edit-tools { padding-left: 8px; width: 43px; }
.anchor { position: relative; }
.anchor .big { width: 65px; }
.find { width: 65px; }
.g-fax .big { width: 93px; }
.collapse { margin-left: auto; align-self: flex-end; padding: 0 8px 0 0; }

.menu { position: absolute; left: 0; top: 100%; width: 145px; padding: 1px; background: #fff; border: 1px solid #c6c6c6; color: #444; }
.menu button { width: 100%; height: 24px; justify-content: flex-start; padding-left: 5px; }
.menu button svg { margin-right: 11px; }
.menu button:disabled { color: #aaa; }
.menu .hot { background: #c5c5c5; }
.menu hr { margin: 0 0 1px 32px; border: 0; border-top: 1px solid #e1e1e1; }
.tip { position: absolute; left: 44px; top: 27px; width: 144px; padding: 6px 4px; background: #fff; border: 1px solid #c6c6c6; color: #555; }
.tip strong { font-weight: 500; display: block; padding-left: 7px; }
.tip p { padding: 9px 7px 6px; border-bottom: 1px solid #e1e1e1; }
.tip a { display: flex; gap: 8px; padding: 7px 6px 0; color: #2b6aa8; font-weight: bold; text-decoration: none; }

.formula { display: flex; padding: 10px 5px; min-height: 48px; background: #e6e6e6; }
.name-box { width: 102px; height: 28px; padding-left: 4px; }
.name-box .dn { margin-right: 6px; }
.grip { width: 3px; height: 12px; margin: 8px 14px; background: radial-gradient(circle, #888 1px, transparent 1px) 0 0 / 3px 4px; }
.fx-tools { display: flex; width: 110px; height: 28px; border: 1px solid #c6c6c6; background: #fff; }
.fx-tools button { flex: 1; }
.fx-tools .fx { font: italic bold 16px/20px "Liberation Serif", serif; color: #666; }
.fx small { font-size: 12px; align-self: flex-end; padding-bottom: 2px; }
.fx-input { flex: 1; margin-left: 2px; display: flex; align-items: center; height: 28px; background: #fff; border: 1px solid #c6c6c6; padding-right: 3px; }
.fx-input input { flex: 1; min-width: 0; border: 0; outline: 0; background: none; font-size: 15px; padding: 0 11px 2px; }

.sheet { display: flex; flex: 1; min-height: 0; border-bottom: 1px solid #999; }
.viewport { flex: 1; min-width: 0; overflow: hidden; border-right: 1px solid #aaa; background: #fff; }
.grid { border-collapse: separate; border-spacing: 0; table-layout: fixed; color: #000; }
.grid th, .grid td { padding: 0; text-align: center; height: 22px; line-height: 21px; overflow: hidden; white-space: nowrap; border: solid #d4d4d4; border-width: 0 1px 1px 0; }
.grid thead th { height: 19px; background: #e6e6e6; border-color: #bbb; border-bottom-color: #999; font: 15px/18px "Noto Sans CJK SC", sans-serif; color: #333; }
.grid .corner { background: linear-gradient(135deg, transparent 50%, #b5b5b5 50%) 14px 5px / 11px 11px no-repeat #e6e6e6; }
.grid tbody th { background: #e6e6e6; font: 15px/18px "Noto Sans CJK SC", sans-serif; color: #333; border-right-color: #aaa; border-bottom-color: #bbb; vertical-align: bottom; padding-bottom: 2px; }
.grid td.data { border-color: #000; font-size: 15px; }
.grid td.num { font-size: 16px; }
.grid .title td, .grid .title th { height: 53px; }
.grid .title td.data { background: #ff0; font-weight: bold; font-size: 15px; }
.grid .title td.data { padding-bottom: 2px; }
.grid .title th { padding-bottom: 0; }
.grid thead th.picked, .grid tbody th.picked { background: #d2d2d2; color: #217346; }
.grid tbody th.picked { border-right: 2px solid #217346; }
.grid thead th.picked { border-bottom-color: #217346; }
.grid td.active { outline: 2px solid #217346; outline-offset: -1px; box-shadow: inset 0 0 0 2px #fff; position: relative; overflow: visible; }
.grid td.active::after { content: ""; position: absolute; right: -3px; bottom: -3px; width: 6px; height: 6px; background: #217346; border: solid #fff; border-width: 1px 0 0 1px; }
.vscroll { width: 21px; padding: 2px 4px 0 3px; display: flex; flex-direction: column; }
.vscroll button, .hscroll button { width: 14px; height: 14px; background: #fff; border: 1px solid #aaa; flex: none; }
.track { flex: 1; background: #d8d8d8; }
.thumb { background: #fff; border: 1px solid #aaa; }
.vscroll .thumb { height: 62%; }

.sheet-tabs { display: flex; min-height: 28px; border-bottom: 1px solid #c6c6c6; color: #444; font-size: 13px; align-items: flex-start; }
.nav-arrows { display: flex; gap: 22px; width: 100px; padding: 9px 0 0 26px; }
.sheets { display: flex; width: 761px; overflow: hidden; }
.sheets button { height: 25px; padding: 0 12px 0 12px; border-left: 1px solid #aaa; flex: none; }
.sheets .current { background: #fff; color: #217346; border-bottom: 2px solid #217346; padding-left: 11px; }
.more { padding: 2px 8px 0; color: #217346; font-weight: bold; }
.add { margin: 6px 4px 0 6px; }
.sheet-tabs .grip { margin: 7px 15px 0 16px; }
.hscroll { flex: 1; display: flex; margin: 7px 21px 0 0; }
.hscroll .thumb { width: 93%; height: 14px; }
.status { display: flex; justify-content: flex-end; align-items: center; min-height: 22px; background: #f3f3f3; }
.status button { width: 40px; height: 22px; }
.status .zoom-btn { width: 21px; font-size: 17px; color: #555; }
.zoom { appearance: none; width: 98px; height: 11px; margin: 0; background: linear-gradient(#999, #999) 0 5px / 100% 1px no-repeat; }
.zoom::-webkit-slider-thumb { appearance: none; width: 5px; height: 11px; background: #666; }
.zoom-value { padding: 0 8px 0 6px; }

.taskbar { position: relative; display: flex; min-height: 40px; background: linear-gradient(#8c8c8c, #999); color: #fff; overflow: hidden; }
.subtitle { position: absolute; left: 368px; top: 0; font: 400 36px/46px "Noto Sans CJK SC", sans-serif; color: rgba(255, 255, 255, .3); white-space: nowrap; }
.apps { display: flex; padding-left: 15px; position: relative; }
.apps button { width: 58px; margin: 0 2px; border: 1px solid transparent; }
.apps .open { background: rgba(255, 255, 255, .15); border-color: #c0c0c0; }
.apps .front { background: rgba(255, 255, 255, .35); border-color: #fff; }
.apps .multi { border-right: 4px double #ccc; }
.adobe { width: 28px; height: 28px; border: 2px solid; font: 600 16px/23px "Open Sans", sans-serif; }
.pr { color: #d878f5; background: #2a0634; }
.ps { color: #00c8ff; background: #001d26; }
.ai { color: #ff7c00; background: #261300; }
.id { color: #ff3f94; background: #2b0517; }
.lr { color: #b4dcf2; background: #14232b; }
.tray { margin-left: auto; display: flex; align-items: center; padding-right: 24px; position: relative; }
.tray button { width: 24px; }
.tray .ime { width: 32px; font-size: 14px; color: #fff; }
.clock { text-align: center; padding-left: 15px; line-height: 17px; }
.clock time { display: block; }

.annot { position: absolute; left: 0; top: 0; z-index: 4; pointer-events: none; }
.watermark { position: absolute; right: 56px; bottom: 28px; width: 290px; height: 122px; z-index: 5; pointer-events: none; }
.watermark > * { position: absolute; white-space: nowrap; }
.key { left: 2px; top: 27px; opacity: .9; }
.activate { left: 56px; top: 28px; color: #aaa; }
.a1 { font-size: 20px; line-height: 26px; }
.a2 { font-size: 14px; line-height: 20px; }
.paw { left: 110px; top: 2px; }
.brand { left: 26px; top: 30px; display: flex; align-items: center; font: bold 45px/60px "Liberation Sans", "Noto Sans CJK SC", sans-serif; color: rgba(255, 255, 255, .75); -webkit-text-stroke: 1px #c8c8c8; }
.bai { font-size: 56px; }
.du { font-size: 40px; margin: 0 12px 0 8px; }
.url { left: 29px; top: 84px; font-size: 27px; line-height: 36px; font-weight: 500; color: rgba(255, 255, 255, .9); text-shadow: 0 0 3px #888; }
```

FILE: grid.js
```js
const titles = ['序号', '销售日期', '流水号', '销售员', '地区', '商品名称', '成本', '单价', '数量', '成交金额', '利润'];
const records = [
  [1, '2017/4/1', 'AA0001', '张琦', '北京', 17, 18, 306, 54],
  [3, '2017/4/1', 'AA0003', '张琦', '北京', 17, 26, 442, 78],
  [6, '2017/4/5', 'AA0006', '陶筠', '北京', 15, 13, 195, 13],
  [10, '2017/4/5', 'AA0010', '张琦', '北京', 17, 27, 459, 81],
  [12, '2017/4/8', 'AA0012', '张琦', '北京', 19, 21, 399, 105],
  [14, '2017/4/8', 'AA0014', '张琦', '北京', 18, 30, 540, 120],
  [17, '2017/4/8', 'AA0017', '陶筠', '北京', 17, 18, 306, 54],
  [18, '2017/4/10', 'AA0018', '严嘉', '北京', 13, 10, 130, -10],
  [11, '2017/4/5', 'AA0011', '姜涵菡', '广州', 14, 17, 238, 0],
  [15, '2017/4/8', 'AA0015', '吕妍', '广州', 17, 22, 374, 66],
  [20, '2017/4/10', 'AA0020', '吕妍', '广州', 20, 16, 320, 96],
  [21, '2017/4/10', 'AA0021', '吕妍', '广州', 18, 20, 360, 80],
  [24, '2017/4/10', 'AA0024', '严嘉', '广州', 17, 17, 289, 51],
  [29, '2017/4/17', 'AA0029', '陶筠', '广州', 16, 13, 208, 26],
  [2, '2017/4/1', 'AA0002', '张琦', '上海', 18, 15, 270, 60],
  [5, '2017/4/1', 'AA0005', '院长', '上海', 19, 30, 570, 150],
  [9, '2017/4/5', 'AA0009', '吕妍', '上海', 19, 28, 532, 140],
  [23, '2017/4/10', 'AA0023', '院长', '上海', 17, 13, 221, 39]
];
const blanks = '<td></td>'.repeat(6);
const letters = 'ABCDEFGHIJKLMNOPQ'.split('');
const widths = [29, ...Array(11).fill(85), ...Array(6).fill(72)];
document.getElementById('cols').innerHTML = widths.map(w => `<col style="width:${w}px">`).join('');
document.querySelector('.grid').style.width = widths.reduce((a, b) => a + b) + 'px';
document.getElementById('head').innerHTML = '<tr><th class="corner"></th>' +
  letters.map(l => `<th${l === 'E' ? ' class="picked"' : ''}>${l}</th>`).join('') + '</tr>';

const cell = (v) => `<td class="data${/^[-\dA]/.test(v) ? ' num' : ''}">${v}</td>`;
const titleRow = '<tr class="title"><th class="picked">1</th>' +
  titles.map((t, i) => `<td class="data${i === 4 ? ' active' : ''}">${t}</td>`).join('') + blanks + '</tr>';
const dataRows = records.map((r, i) => {
  const full = [...r.slice(0, 5), '鼠标', 14, ...r.slice(5)];
  return `<tr><th>${i + 2}</th>${full.map(cell).join('')}${blanks}</tr>`;
});
const lastRow = '<tr><th>20</th>' + cell('').repeat(11) + blanks + '</tr>';
document.getElementById('body').innerHTML = titleRow + dataRows.join('') + lastRow;
```
